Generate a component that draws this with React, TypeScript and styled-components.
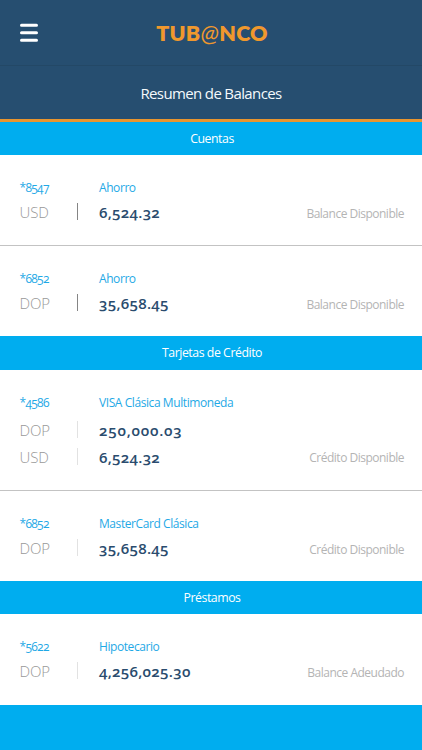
import React from 'react';
import styled, { createGlobalStyle } from 'styled-components';

const Global = createGlobalStyle`
  *, *::before, *::after { box-sizing: border-box; }
  html, body { margin: 0; padding: 0; background: #fff; }
  body { font-family: 'Open Sans', 'Noto Sans', sans-serif; font-variant-numeric: oldstyle-nums; }
`;

const Screen = styled.div`
  width: 422px;
  height: 750px;
  display: flex;
  flex-direction: column;
  overflow: hidden;
  background: #00adef;
`;

const Header = styled.header`
  height: 66px;
  flex: none;
  display: grid;
  grid-template-columns: 60px 1fr 58px;
  align-items: center;
  background: #264e70;
  border-bottom: 1px solid #234866;
`;

const MenuButton = styled.button`
  width: 18px;
  height: 20px;
  margin: 1px 0 0 20px;
  padding: 0;
  border: 0;
  background: none;
  svg { display: block; }
`;

const Logo = styled.div`
  display: flex;
  align-items: baseline;
  justify-content: center;
  font: 800 21.5px/28px Lato, sans-serif;
  letter-spacing: 0.25px;
  color: #f0982d;
`;

const At = styled.span`
  font-weight: 400;
  font-style: italic;
  font-size: 24px;
`;

const Title = styled.h1`
  height: 56px;
  flex: none;
  margin: 0;
  text-align: center;
  font-size: 15px;
  font-weight: 400;
  line-height: 54px;
  letter-spacing: -0.6px;
  word-spacing: -0.2px;
  color: #f4f9fc;
  background: #264e70;
  border-bottom: 3px solid #e8952f;
`;

const Band = styled.h2<{ $h: number }>`
  height: ${p => p.$h}px;
  flex: none;
  margin: 0;
  padding-left: 2px;
  text-align: center;
  font-size: 12.3px;
  font-weight: 400;
  line-height: ${p => p.$h}px;
  letter-spacing: -0.45px;
  color: #fff;
  background: #00adef;
`;

const Entry = styled.article<{ $h: number; $rule?: boolean }>`
  height: ${p => p.$h}px;
  flex: none;
  padding: 21px 18px 0 20px;
  background: #fff;
  border-bottom: ${p => (p.$rule ? '1px solid #c3c3c3' : '0')};
`;

const Row = styled.div<{ $h: number }>`
  height: ${p => p.$h}px;
  display: grid;
  grid-template-columns: 57px 22px auto 1fr;
  align-items: center;
  white-space: nowrap;
`;

const Heading = styled(Row)`
  align-items: start;
  font-size: 12px;
  line-height: 24px;
  color: #1fa9e6;
`;

const Account = styled.span`
  margin-left: -0.5px;
  letter-spacing: -0.7px;
`;

const Product = styled.span`
  grid-column: 3;
  letter-spacing: -0.42px;
`;

const Currency = styled.span`
  margin: -2px 0 0 -0.5px;
  font-size: 15px;
  font-weight: 300;
  line-height: 20px;
  letter-spacing: -0.1px;
  color: #989898;
`;

const Divider = styled.i<{ $dark?: boolean }>`
  width: 1px;
  height: 17px;
  margin-top: -3px;
  background: ${p => (p.$dark ? '#858585' : '#e2e2e2')};
`;

const Amount = styled.strong<{ $tracking?: number }>`
  margin-top: -2px;
  font-size: 15px;
  font-weight: 600;
  line-height: 20px;
  letter-spacing: ${p => p.$tracking ?? 0.3}px;
  color: #2a4c6e;
`;

const Kind = styled.span<{ $raised: boolean }>`
  justify-self: end;
  padding-top: ${p => (p.$raised ? 0 : 2)}px;
  font-size: 12px;
  line-height: 18px;
  letter-spacing: -0.5px;
  color: #b4b4b4;
`;

type Line = { currency: string; amount: string; tracking?: number };
type Item = { id: string; name: string; kind: string; lines: Line[]; h: number; gap: number; rule?: boolean };
type Group = { title: string; h: number; dark?: boolean; items: Item[] };

const groups: Group[] = [
  {
    title: 'Cuentas', h: 33, dark: true,
    items: [
      { id: '*8547', name: 'Ahorro', kind: 'Balance Disponible', lines: [{ currency: 'USD', amount: '6,524.32' }], h: 91, gap: 23, rule: true },
      { id: '*6852', name: 'Ahorro', kind: 'Balance Disponible', lines: [{ currency: 'DOP', amount: '35,658.45' }], h: 90, gap: 23 },
    ],
  },
  {
    title: 'Tarjetas de Crédito', h: 34,
    items: [
      { id: '*4586', name: 'VISA Clásica Multimoneda', kind: 'Crédito Disponible', lines: [{ currency: 'DOP', amount: '250,000.03', tracking: 0.8 }, { currency: 'USD', amount: '6,524.32' }], h: 121, gap: 26, rule: true },
      { id: '*6852', name: 'MasterCard Clásica', kind: 'Crédito Disponible', lines: [{ currency: 'DOP', amount: '35,658.45' }], h: 90, gap: 23 },
    ],
  },
  {
    title: 'Préstamos', h: 33,
    items: [
      { id: '*5622', name: 'Hipotecario', kind: 'Balance Adeudado', lines: [{ currency: 'DOP', amount: '4,256,025.30' }], h: 91, gap: 23 },
    ],
  },
];

export default function App() {
  return (
    <>
      <Global />
      <Screen>
        <Header>
          <MenuButton aria-label="Menú">
            <svg width="18" height="20" viewBox="0 0 18 20" stroke="#fff" strokeWidth="3" strokeLinecap="round">
              <path d="M1.5 2.3h15M1.5 9.8h15M1.5 17.3h15" />
            </svg>
          </MenuButton>
          <Logo>TUB<At>@</At>NCO</Logo>
        </Header>
        <Title>Resumen de Balances</Title>
        {groups.map(g => (
          <React.Fragment key={g.title}>
            <Band $h={g.h}>{g.title}</Band>
            {g.items.map(it => (
              <Entry key={it.id} $h={it.h} $rule={it.rule}>
                <Heading $h={it.gap}>
                  <Account>{it.id}</Account>
                  <Product>{it.name}</Product>
                </Heading>
                {it.lines.map((l, i) => (
                  <Row key={l.currency} $h={27}>
                    <Currency>{l.currency}</Currency>
                    <Divider $dark={g.dark} />
                    <Amount $tracking={l.tracking}>{l.amount}</Amount>
                    {i === it.lines.length - 1 && <Kind $raised={i > 0}>{it.kind}</Kind>}
                  </Row>
                ))}
              </Entry>
            ))}
          </React.Fragment>
        ))}
      </Screen>
    </>
  );
}
